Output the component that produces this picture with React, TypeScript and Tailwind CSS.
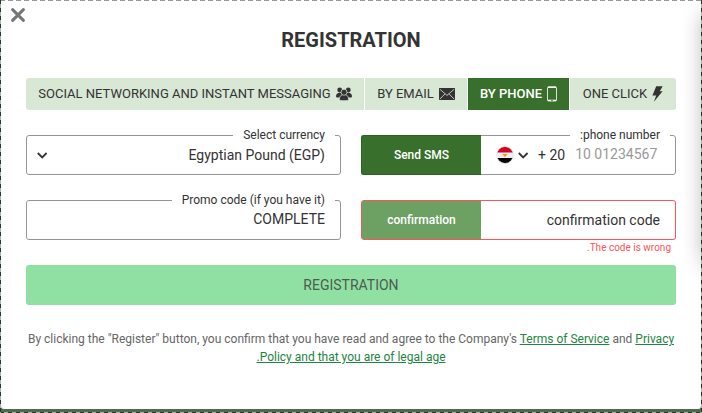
import React from 'react';

const CloseIcon = () => (
  <svg className="h-4 w-4" viewBox="0 0 16 16" fill="none" stroke="#757575" strokeWidth="3" strokeLinecap="round">
    <path d="M2.6 2.6l10.8 10.8M13.4 2.6L2.6 13.4" />
  </svg>
);

const PeopleIcon = () => (
  <svg className="h-[14px] w-4" viewBox="0 0 16 14" fill="#333333">
    <circle cx="3.7" cy="3" r="2.4" />
    <circle cx="12.3" cy="3" r="2.4" />
    <path d="M0 9.600C0 7 1.500 5.800 3.700 5.800s3.300 1.200 3.300 3.800v.8H.8Q0 10.400 0 9.600zM16 9.600c0-2.600-1.500-3.800-3.700-3.800S9 7 9 9.600v.8h6.200q.8 0 .8-.8z" />
    <g stroke="#d8e8d5" strokeWidth=".7">
      <path d="M3.400 12.400C3.400 9 5.300 7.500 8 7.500s4.600 1.500 4.600 4.900q0 1.300-4.600 1.300t-4.600-1.300z" />
      <circle cx="8" cy="5.200" r="3" />
    </g>
  </svg>
);

const MailIcon = () => (
  <svg className="h-3 w-4" viewBox="0 0 16 12">
    <rect width="16" height="12" fill="#333333" />
    <path d="M.8 1.2L8 7.4l7.2-6.2M.8 11.2l5.2-5.4M15.2 11.2L10 5.8" fill="none" stroke="#d8e8d5" strokeWidth=".8" />
  </svg>
);

const PhoneIcon = () => (
  <svg className="h-4 w-[10px]" viewBox="0 0 10 16" fill="none">
    <rect x=".5" y="1" width="9" height="14" rx=".8" stroke="#ffffff" strokeWidth=".8" />
    <path d="M1 1.300h8M1 14.400h8" stroke="#ffffff" strokeWidth="1.400" />
    <path d="M4.300 14.500h1.400" stroke="#386f2c" />
  </svg>
);

const BoltIcon = () => (
  <svg className="h-4 w-[11px]" viewBox="0 0 11 16" fill="#333333">
    <path d="M4.200.3h6.500L7.700 5.300h2.900L1.900 15.700l2.300-6.200H.4z" />
  </svg>
);

const Chevron = () => (
  <svg className="h-[7px] w-[11px] shrink-0" viewBox="0 0 11 7" fill="none" stroke="#333333" strokeWidth="1.8">
    <path d="M.8 1l4.400 4.400L9.600 1" />
  </svg>
);

const EgyptFlag = () => (
  <svg className="h-[18px] w-[18px] shrink-0" viewBox="0 0 18 18">
    <defs>
      <clipPath id="flag-circle">
        <circle cx="9" cy="9" r="8.3" />
      </clipPath>
    </defs>
    <g clipPath="url(#flag-circle)">
      <rect width="18" height="18" fill="#f0f0f0" />
      <rect width="18" height="6.5" fill="#d80027" />
      <rect y="12" width="18" height="6" fill="#000000" />
      <path d="M6.200 8h5.600L10.200 9.400v1.100H7.800V9.400z" fill="#ff9811" />
    </g>
    <circle cx="9" cy="9" r="8.5" fill="none" stroke="#dfe6d8" strokeWidth=".7" />
  </svg>
);

const TABS = [
  { label: 'SOCIAL NETWORKING AND INSTANT MESSAGING', icon: <PeopleIcon />, width: 'w-[338px]' },
  { label: 'BY EMAIL', icon: <MailIcon />, width: 'w-[102px]' },
  { label: 'BY PHONE', icon: <PhoneIcon />, width: 'w-[101px]', active: true },
  { label: 'ONE CLICK', icon: <BoltIcon />, width: 'w-[106px]' },
];

const FieldLabel = ({ children }: { children: React.ReactNode }) => (
  <span className="absolute -top-[9px] right-[5px] bg-white px-[10px] text-[12px] leading-4 whitespace-nowrap">
    {children}
  </span>
);

const App: React.FC = () => {
  return (
    <div className="relative flex h-[413px] w-[702px] flex-col overflow-hidden bg-[#52684f] px-px font-['Roboto',sans-serif] text-[#333333]">
      <main className="flex h-[409px] flex-col overflow-hidden rounded-b-[3px] bg-white px-[25px]">
        <button className="-ml-4 mt-[7px] h-4 w-4" aria-label="Close">
          <CloseIcon />
        </button>
        <h1 className="mt-[5px] text-center text-[20px] leading-6 font-bold">REGISTRATION</h1>

        <nav className="mt-[26px] flex h-8 gap-px overflow-hidden rounded-[3px]">
          {TABS.map(tab => (
            <button
              key={tab.label}
              className={`flex shrink-0 items-center justify-center gap-[5px] text-[13px] whitespace-nowrap ${tab.width} ${
                tab.active ? 'bg-[#386f2c] font-medium text-white' : 'bg-[#d8e8d5]'
              }`}
            >
              {tab.label}
              {tab.icon}
            </button>
          ))}
        </nav>

        <div className="mt-[25px] grid grid-cols-2 gap-x-5 gap-y-[25px]">
          <div className="relative flex h-10 items-center justify-between rounded-[3px] border border-[#959595] pr-[15px] pl-[10px]">
            <FieldLabel>Select currency</FieldLabel>
            <Chevron />
            <span className="text-[14px]">Egyptian Pound (EGP)</span>
          </div>

          <div className="relative flex h-10 items-center rounded-[3px] border border-[#959595]">
            <button className="-my-px -ml-px h-10 w-[120px] shrink-0 rounded-l-[3px] border border-r-0 border-[#315f29] bg-[#386f2c] text-[12px] font-medium text-white">
              Send SMS
            </button>
            <FieldLabel>:phone number</FieldLabel>
            <div className="flex items-center gap-[4px] pl-[15px]">
              <EgyptFlag />
              <Chevron />
            </div>
            <span className="ml-[9px] text-[14px]">+ 20</span>
            <span className="ml-[10px] pb-[2px] text-[14px] text-[#999999]">10 01234567</span>
          </div>

          <div className="relative flex h-10 items-center justify-end rounded-[3px] border border-[#959595] pr-[15px] pb-[2px]">
            <FieldLabel>Promo code (if you have it)</FieldLabel>
            <span className="text-[14px]">COMPLETE</span>
          </div>

          <div className="flex h-10 items-center justify-between rounded-[3px] border border-[#ff5357] pr-[15px]">
            <button className="h-full w-[119px] bg-[#6ca163] text-[12px] font-medium text-white">confirmation</button>
            <span className="text-[14px]">confirmation code</span>
          </div>
        </div>

        <p className="h-[25px] pr-[5px] text-right text-[10px] leading-4 text-[#ff5357]">.The code is wrong</p>

        <button className="h-10 shrink-0 rounded-[3px] bg-[#90e0a4] text-[14px] text-[#4c5d4f]">REGISTRATION</button>

        <p className="mt-[25px] text-center text-[12px] leading-[18px] whitespace-nowrap text-[#666666]">
          By clicking the "Register" button, you confirm that you have read and agree to the Company's{' '}
          <a className="text-[#238540] underline">Terms of Service</a> and{' '}
          <a className="text-[#238540] underline">
            Privacy
            <br />
            .Policy and that you are of legal age
          </a>
        </p>
      </main>

      {/* page shadow on the right and dashed selection frame */}
      <div className="pointer-events-none absolute top-0 right-px h-[280px] w-[18px] bg-linear-to-l from-black/12 via-black/4 to-transparent mask-[linear-gradient(to_bottom,transparent,black_30px,black_245px,transparent)]" />
      <div className="pointer-events-none absolute inset-x-0 top-0 h-px bg-[repeating-linear-gradient(90deg,#999_0_5px,#fff_5px_8px)]" />
      <div className="pointer-events-none absolute inset-x-0 bottom-0 h-px bg-[repeating-linear-gradient(90deg,#26382b_0_4px,#a8b5a7_4px_8px)]" />
      <div className="pointer-events-none absolute inset-y-0 left-0 w-px bg-[repeating-linear-gradient(#26382b_0_4px,#a8b5a7_4px_8px)]" />
      <div className="pointer-events-none absolute inset-y-0 right-0 w-px bg-[repeating-linear-gradient(#26382b_0_4px,#a8b5a7_4px_8px)]" />
    </div>
  );
};

export default App;
